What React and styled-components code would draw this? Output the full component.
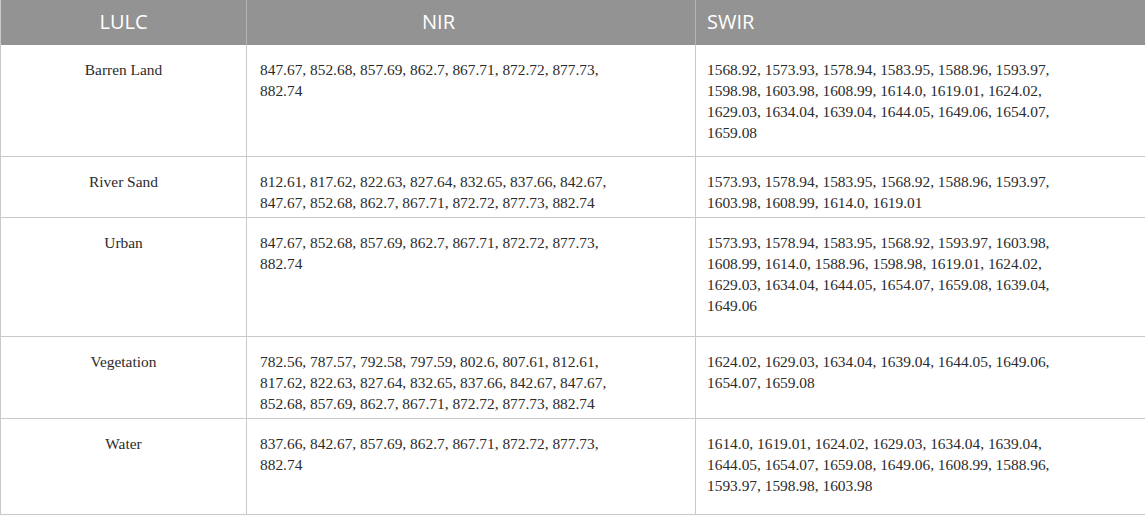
import React from 'react'
import styled, { createGlobalStyle } from 'styled-components'

const rows = [
  {
    name: 'Barren Land',
    height: 111,
    nir: ['847.67, 852.68, 857.69, 862.7, 867.71, 872.72, 877.73,', '882.74'],
    swir: [
      '1568.92, 1573.93, 1578.94, 1583.95, 1588.96, 1593.97,',
      '1598.98, 1603.98, 1608.99, 1614.0, 1619.01, 1624.02,',
      '1629.03, 1634.04, 1639.04, 1644.05, 1649.06, 1654.07,',
      '1659.08',
    ],
  },
  {
    name: 'River Sand',
    height: 61,
    nir: [
      '812.61, 817.62, 822.63, 827.64, 832.65, 837.66, 842.67,',
      '847.67, 852.68, 862.7, 867.71, 872.72, 877.73, 882.74',
    ],
    swir: [
      '1573.93, 1578.94, 1583.95, 1568.92, 1588.96, 1593.97,',
      '1603.98, 1608.99, 1614.0, 1619.01',
    ],
  },
  {
    name: 'Urban',
    height: 119,
    nir: ['847.67, 852.68, 857.69, 862.7, 867.71, 872.72, 877.73,', '882.74'],
    swir: [
      '1573.93, 1578.94, 1583.95, 1568.92, 1593.97, 1603.98,',
      '1608.99, 1614.0, 1588.96, 1598.98, 1619.01, 1624.02,',
      '1629.03, 1634.04, 1644.05, 1654.07, 1659.08, 1639.04,',
      '1649.06',
    ],
  },
  {
    name: 'Vegetation',
    height: 82,
    nir: [
      '782.56, 787.57, 792.58, 797.59, 802.6, 807.61, 812.61,',
      '817.62, 822.63, 827.64, 832.65, 837.66, 842.67, 847.67,',
      '852.68, 857.69, 862.7, 867.71, 872.72, 877.73, 882.74',
    ],
    swir: [
      '1624.02, 1629.03, 1634.04, 1639.04, 1644.05, 1649.06,',
      '1654.07, 1659.08',
    ],
  },
  {
    name: 'Water',
    height: 96,
    nir: ['837.66, 842.67, 857.69, 862.7, 867.71, 872.72, 877.73,', '882.74'],
    swir: [
      '1614.0, 1619.01, 1624.02, 1629.03, 1634.04, 1639.04,',
      '1644.05, 1654.07, 1659.08, 1649.06, 1608.99, 1588.96,',
      '1593.97, 1598.98, 1603.98',
    ],
  },
]

const GlobalStyle = createGlobalStyle`
  body {
    margin: 0;
    background: #ffffff;
  }
`

const Lines = ({ lines }) => lines.map((l, i) => <Line key={i}>{l}</Line>)

const App = () => (
  <>
    <GlobalStyle />
    <Table>
      <colgroup>
        <col style={{ width: 246 }} />
        <col style={{ width: 449 }} />
        <col style={{ width: 450 }} />
      </colgroup>
      <thead>
        <HeadRow>
          <HeadCell $align="center">LULC</HeadCell>
          <HeadCell $pad="175px">NIR</HeadCell>
          <HeadCell $pad="11px">SWIR</HeadCell>
        </HeadRow>
      </thead>
      <tbody>
        {rows.map(r => (
          <BodyRow key={r.name} $h={r.height}>
            <Cell $align="center">{r.name}</Cell>
            <Cell $pad="13px"><Lines lines={r.nir} /></Cell>
            <Cell $pad="11px"><Lines lines={r.swir} /></Cell>
          </BodyRow>
        ))}
      </tbody>
    </Table>
  </>
)

const Table = styled.table`
  width: 1145px;
  table-layout: fixed;
  border-collapse: collapse;
  border-left: 1px solid #c9c9c9;
  border-right: 1px solid #c9c9c9;
`

const HeadRow = styled.tr`
  height: 45px;
  background: #939393;
`

const HeadCell = styled.th`
  padding: 0 0 2px ${p => p.$pad || '0'};
  text-align: ${p => p.$align || 'left'};
  vertical-align: middle;
  font-family: "Open Sans", "Noto Sans", sans-serif;
  font-weight: 400;
  font-size: 20px;
  color: #ffffff;
  border-left: 1px solid #b4b4b4;
  &:first-child {
    border-left: none;
  }
`

const BodyRow = styled.tr`
  height: ${p => p.$h}px;
`

const Cell = styled.td`
  padding: 14px 0 0 ${p => p.$pad || '0'};
  text-align: ${p => p.$align || 'left'};
  vertical-align: top;
  font-family: "Liberation Serif", "Times New Roman", serif;
  font-size: 15.4px;
  line-height: 21px;
  color: #2b2b2b;
  border: 1px solid #c9c9c9;
  border-top: none;
`

const Line = styled.div`
  white-space: nowrap;
`

export default App
